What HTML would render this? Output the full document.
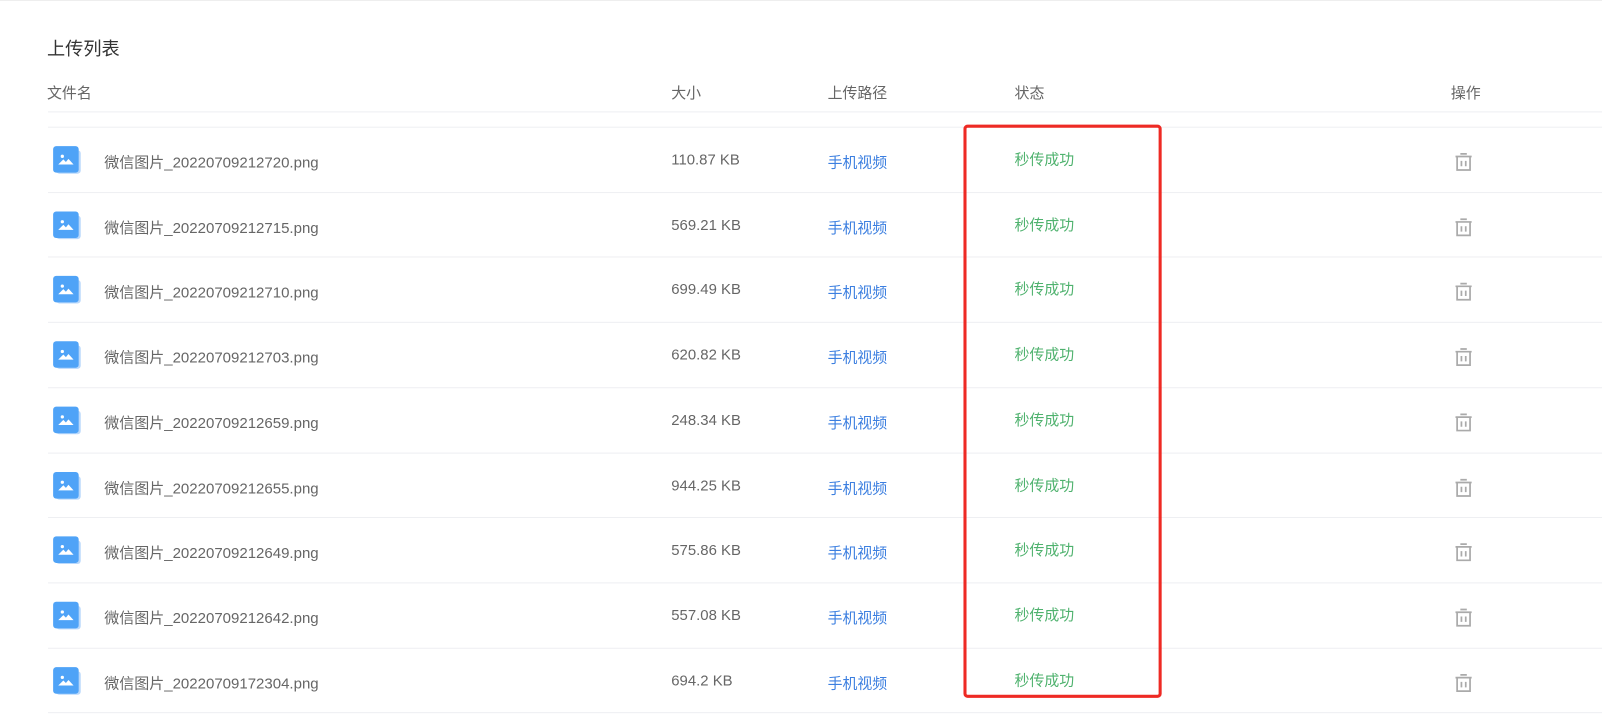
<!DOCTYPE html>
<html><head><meta charset="utf-8"><style>
body{margin:0;width:1602px;height:716px;background:#fff;font-family:"Liberation Sans","Noto Sans CJK SC",sans-serif;position:relative;overflow:hidden}
#w{position:absolute;left:0;top:0;width:1568px;height:701px;transform:scale(1.0217);transform-origin:0 0}
.a{position:absolute;white-space:nowrap;line-height:20px}
.t{left:46px;top:38px;font-size:17.8px;color:#333}
.h{font-size:14.6px;color:#666;top:82px}
.line{position:absolute;left:47px;right:-40px;height:1px;background:#eeeff2}
.fn{font-size:14.7px;color:#666;left:102px}
.sz{font-size:14.6px;color:#666;left:657px}
.pa{font-size:14.6px;color:#3c7fe0;left:810px}
.st{font-size:14.6px;color:#4fb26e;left:993px}
.ic{position:absolute;left:52px;width:26px;height:27px}
.ic .b{position:absolute;left:3px;top:4px;width:24px;height:23px;background:#b9d8fb;border-radius:3px}
.ic .f{position:absolute;left:0;top:0;width:25px;height:26px;background:#4fa3f7;border-radius:3px}
.tr{position:absolute;left:1423px;width:19px;height:19px}
.box{position:absolute;left:943px;top:122px;width:188px;height:555px;border:3px solid #ee2a24;border-radius:4px}
</style></head><body>
<div style="position:absolute;left:0;right:0;top:0;height:1px;background:#eee"></div>
<div id="w">
<div class="a t">上传列表</div>
<div class="a h" style="left:46px">文件名</div>
<div class="a h" style="left:657px">大小</div>
<div class="a h" style="left:810px">上传路径</div>
<div class="a h" style="left:993px">状态</div>
<div class="a h" style="left:1420px">操作</div>
<div class="line" style="top:109px"></div>
<div id="rows"></div>
<div class="box"></div>
</div>
<script>
var d=[["20220709212720","110.87 KB"],["20220709212715","569.21 KB"],["20220709212710","699.49 KB"],["20220709212703","620.82 KB"],["20220709212659","248.34 KB"],["20220709212655","944.25 KB"],["20220709212649","575.86 KB"],["20220709212642","557.08 KB"],["20220709172304","694.2 KB"]];
var h='';
for(var i=0;i<d.length;i++){var y=124+i*63.7;var c=y+32;
h+='<div class="line" style="top:'+Math.round(y)+'px"></div>';
h+='<div class="ic" style="top:'+Math.round(c-13)+'px"><div class="b"></div><div class="f"><svg width="25" height="26" viewBox="0 0 25 26"><circle cx="9" cy="10" r="1.6" fill="#fff"/><path d="M5 18 L10 13 L12.5 15.5 L15 12.5 L20 18 Z" fill="#fff"/></svg></div></div>';
h+='<div class="a fn" style="top:'+Math.round(c-6)+'px">微信图片_'+d[i][0]+'.png</div>';
h+='<div class="a sz" style="top:'+Math.round(c-9)+'px">'+d[i][1]+'</div>';
h+='<div class="a pa" style="top:'+Math.round(c-6)+'px">手机视频</div>';
h+='<div class="a st" style="top:'+Math.round(c-9)+'px">秒传成功</div>';
h+='<svg class="tr" style="top:'+Math.round(c-7)+'px" viewBox="0 0 18 18" fill="none" stroke="#aaa" stroke-width="1.6"><path d="M6 1.5h6M1.5 4h15M3 4v12.5h12V4M7 8v5M11 8v5"/></svg>';}
h+='<div class="line" style="top:697px"></div>';
document.getElementById('rows').innerHTML=h;
</script>
</body></html>
